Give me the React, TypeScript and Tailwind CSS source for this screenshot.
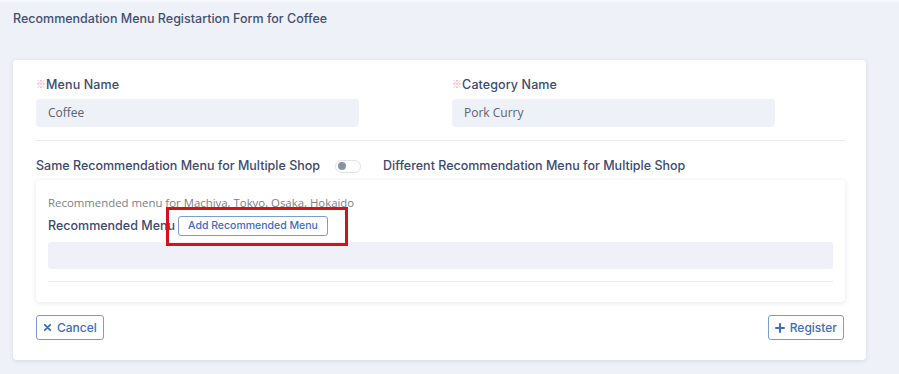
import React from "react";

const font = "font-['Inter','Open_Sans',sans-serif]";

function Field({ label, value }: { label: string; value: string }) {
  return (
    <div className="flex flex-col">
      <label className={`${font} text-[12.5px] leading-[18px] font-medium text-[#3d4a6e] tracking-[0.1px]`}>
        <span className="font-['Noto_Sans_CJK_JP',sans-serif] text-[10px] font-normal text-[#f29aa8] align-[1px]">※</span>
        {label}
      </label>
      <div className="mt-[5px] h-[28px] w-[323px] rounded-[4px] bg-[#eef1f7] px-3 flex items-center">
        <span className="font-['Open_Sans',sans-serif] text-[12px] text-[#5b6270]">{value}</span>
      </div>
    </div>
  );
}

export default function App() {
  return (
    <div className="min-h-screen w-[899px] bg-[#eef1f7] border-t-2 border-[#f7f8fc]">
      <p className={`${font} px-[13px] pt-[9px] text-[12.5px] leading-[16px] font-medium text-[#44506f]`}>
        Recommendation Menu Registartion Form for Coffee
      </p>

      <div className="mx-[13px] mt-[33px] w-[853px] rounded-[4px] bg-white pl-[23px] pr-[21px] pt-[15px] pb-[20px] shadow-[0_1px_4px_rgba(60,80,120,0.15)]">
        {/* Names */}
        <div className="grid grid-cols-[416px_1fr]">
          <Field label="Menu Name" value="Coffee" />
          <Field label="Category Name" value="Pork Curry" />
        </div>

        <div className="mt-[13px] border-t border-[#e8ebf1]" />

        {/* Toggle row */}
        <div className={`${font} mt-[16px] flex items-center text-[12.5px] leading-[18px] font-medium text-[#3d4a6e]`}>
          <span>Same Recommendation Menu for Multiple Shop</span>
          <span className="ml-[15px] flex h-[13px] w-[26px] items-center rounded-full border border-[#dfe2e8] bg-white px-[2px]">
            <span className="h-[8px] w-[8px] rounded-full bg-[#8a92a6]" />
          </span>
          <span className="ml-[22px]">Different Recommendation Menu for Multiple Shop</span>
        </div>

        {/* Recommended menu card */}
        <div className="relative mt-[5px] rounded-[4px] bg-white px-[12px] pt-[15px] pb-[20px] shadow-[0_1px_5px_rgba(60,80,120,0.14)]">
          <p className="font-['Open_Sans',sans-serif] text-[11.4px] leading-[16px] text-[#7a7f8a]">
            Recommended menu for Machiya, Tokyo, Osaka, Hokaido
          </p>
          <div className="mt-[5px] flex items-center">
            <span className={`${font} text-[12.5px] font-medium text-[#3d4a6e]`}>Recommended Menu</span>
            <button className={`${font} ml-[3px] h-[20px] rounded-[3px] border border-[#7d9bd6] bg-white px-[9px] text-[10.5px] leading-[18px] font-medium text-[#3b6cc6]`}>
              Add Recommended Menu
            </button>
          </div>
          <div className="mt-[6px] h-[27px] rounded-[3px] bg-[#eef1f7]" />
          <div className="mt-[12px] border-t border-[#e8ebf1]" />

          <div className="absolute left-[130px] top-[27px] h-[39px] w-[182px] border-[3px] border-[#d3121c]" />
        </div>

        {/* Actions */}
        <div className="mt-[13px] flex justify-between pr-[1px]">
          <button className={`${font} flex h-[25px] items-center gap-[5px] rounded-[3px] border border-[#7d9bd6] bg-white px-[6px] text-[12px] font-medium text-[#3b6cc6]`}>
            <svg width="9" height="9" viewBox="0 0 10 10">
              <path d="M2 2L8 8M8 2L2 8" stroke="#3b6cc6" strokeWidth="2" strokeLinecap="round" />
            </svg>
            Cancel
          </button>
          <button className={`${font} flex h-[25px] items-center gap-[5px] rounded-[3px] border border-[#7d9bd6] bg-white px-[6px] text-[12px] font-medium text-[#3b6cc6]`}>
            <svg width="10" height="10" viewBox="0 0 10 10">
              <path d="M5 1V9M1 5H9" stroke="#3b6cc6" strokeWidth="2" strokeLinecap="round" />
            </svg>
            Register
          </button>
        </div>
      </div>
    </div>
  );
}
